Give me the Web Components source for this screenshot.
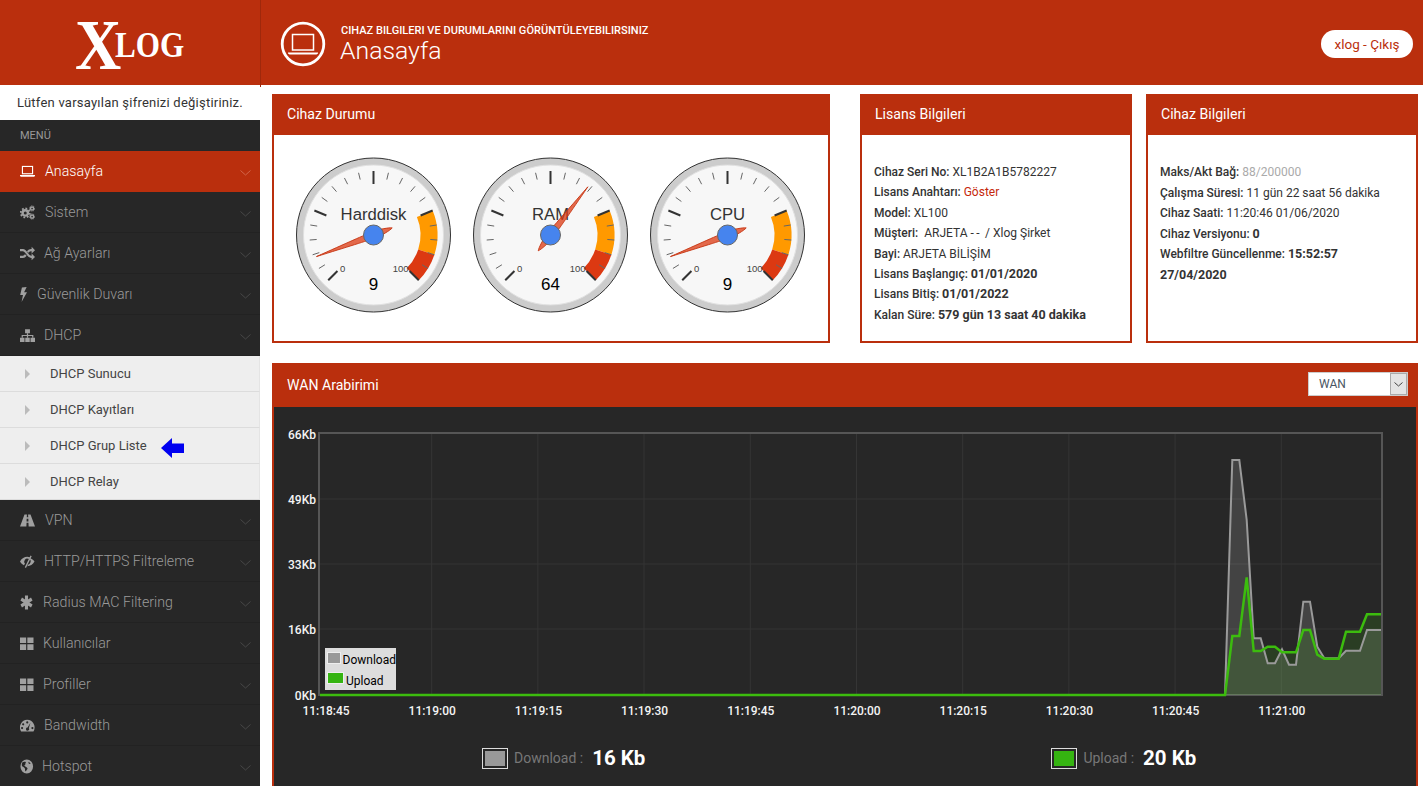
<!DOCTYPE html>
<html lang="tr">
<head>
<meta charset="utf-8">
<title>XLOG - Anasayfa</title>
<style>
  html, body { margin: 0; height: 100%; overflow: hidden; background: #fff; }
  body { font-family: Roboto, "Liberation Sans", sans-serif; color: #333; }
  b { font-weight: 700; font-size: 12.5px; }
  .lbl { font-weight: 500; }
</style>
</head>
<body>
<xlog-app>
  <app-header slot="header"></app-header>
  <side-nav slot="nav">
    <nav-item icon="laptop" active>Anasayfa</nav-item>
    <nav-item icon="cogs">Sistem</nav-item>
    <nav-item icon="random">Ağ Ayarları</nav-item>
    <nav-item icon="bolt">Güvenlik Duvarı</nav-item>
    <nav-item icon="sitemap">DHCP</nav-item>
    <sub-item>DHCP Sunucu</sub-item>
    <sub-item>DHCP Kayıtları</sub-item>
    <sub-item marked>DHCP Grup Liste</sub-item>
    <sub-item>DHCP Relay</sub-item>
    <nav-item icon="road">VPN</nav-item>
    <nav-item icon="eye">HTTP/HTTPS Filtreleme</nav-item>
    <nav-item icon="asterisk">Radius MAC Filtering</nav-item>
    <nav-item icon="grid">Kullanıcılar</nav-item>
    <nav-item icon="grid">Profiller</nav-item>
    <nav-item icon="dash">Bandwidth</nav-item>
    <nav-item icon="globe">Hotspot</nav-item>
  </side-nav>
  <dash-board slot="main">
    <info-card slot="status" heading="Cihaz Durumu" plain>
      <gauge-dial label="Harddisk" value="9"></gauge-dial>
      <gauge-dial label="RAM" value="64"></gauge-dial>
      <gauge-dial label="CPU" value="9"></gauge-dial>
    </info-card>
    <info-card slot="license" heading="Lisans Bilgileri">
      <div><span class="lbl">Cihaz Seri No:</span> XL1B2A1B5782227</div>
      <div><span class="lbl">Lisans Anahtarı:</span> <span style="color:#c5280c">Göster</span></div>
      <div><span class="lbl">Model:</span> XL100</div>
      <div><span class="lbl" style="margin-right:3px">Müşteri:</span> ARJETA <span style="letter-spacing:2.5px">--</span> / Xlog Şirket</div>
      <div><span class="lbl">Bayi:</span> ARJETA BİLİŞİM</div>
      <div><span class="lbl">Lisans Başlangıç:</span> <b>01/01/2020</b></div>
      <div><span class="lbl">Lisans Bitiş:</span> <b>01/01/2022</b></div>
      <div><span class="lbl">Kalan Süre:</span> <b>579 gün 13 saat 40 dakika</b></div>
    </info-card>
    <info-card slot="device" heading="Cihaz Bilgileri" style="--lh: 20.6px">
      <div><span class="lbl">Maks/Akt Bağ:</span> <span style="color:#aaa">88/200000</span></div>
      <div><span class="lbl">Çalışma Süresi:</span> 11 gün 22 saat 56 dakika</div>
      <div><span class="lbl">Cihaz Saati:</span> 11:20:46 01/06/2020</div>
      <div><span class="lbl">Cihaz Versiyonu:</span> <b>0</b></div>
      <div><span class="lbl">Webfiltre Güncellenme:</span> <b>15:52:57</b></div>
      <div><b>27/04/2020</b></div>
    </info-card>
    <wan-panel slot="wan"></wan-panel>
  </dash-board>
</xlog-app>

<script>
// [viewBox width, width in px, gap to the label, markup]
const ICONS = {
  laptop: [16, 15, 10, '<rect x="2.6" y="2.6" width="10.8" height="7.8" fill="none" stroke="currentColor" stroke-width="1.2"/><path d="M0 11.8h16v.9l-1 .8H1l-1-.8z" fill="currentColor"/>'],
  cogs: [16, 15, 10, '<circle cx="5.6" cy="8.4" r="2.9" fill="none" stroke="currentColor" stroke-width="2.6"/><circle cx="5.6" cy="8.4" r="4.8" fill="none" stroke="currentColor" stroke-width="2" stroke-dasharray="1.9 1.8"/><circle cx="12.9" cy="3.7" r="1.7" fill="none" stroke="currentColor" stroke-width="1.6"/><circle cx="12.9" cy="12.3" r="1.7" fill="none" stroke="currentColor" stroke-width="1.6"/><circle cx="12.9" cy="3.7" r="2.8" fill="none" stroke="currentColor" stroke-width="1" stroke-dasharray="1.2 1.2"/><circle cx="12.9" cy="12.3" r="2.8" fill="none" stroke="currentColor" stroke-width="1" stroke-dasharray="1.2 1.2"/>'],
  random: [16, 15, 9, '<path d="M0 4.4h3.2c3.6 0 5 7.2 8.6 7.2h1.4M0 11.6h3.2c1.3 0 2.2-.9 3-2M8.2 6.3c.9-1 2-1.9 3.6-1.9h1.4" fill="none" stroke="currentColor" stroke-width="2.3"/><path d="M12.4 .8 16 4.4l-3.6 3.6zM12.4 8l3.6 3.6-3.6 3.6z" fill="currentColor"/>'],
  bolt: [8, 7, 10, '<path d="M2.2 .5 7.6 0 4.7 5.6H8L1.8 16l1.6-7.500H.2z" fill="currentColor"/>'],
  sitemap: [16, 15, 9, '<path d="M5.400 1.200h5.200v4.300H5.400zM0 10.500h4.800v4.300H0zM5.600 10.500h4.800v4.300H5.600zM11.200 10.500H16v4.300h-4.800z" fill="currentColor"/><path d="M8 5.500v5M2.400 10.500V8h11.200v2.500" fill="none" stroke="currentColor" stroke-width="1.3"/>'],
  road: [16, 15, 10, '<path d="M4.800 1.500h2.600l-.2 3h1.600l-.2-3h2.600L16 14.500H9.200L9 10.500H7L6.800 14.500H0zM7.100 6l-.1 3h2l-.1-3z" fill="currentColor"/>'],
  eye: [16, 14.5, 9.5, '<path d="M0 8c2-3.400 4.800-5 8-5 1 0 1.900.2 2.700.5L9.500 5.200A3.400 3.400 0 0 0 5.500 10.500L4.300 12C2.600 11.200 1.100 9.900 0 8zM5.300 14 11.600 1.500 12.900 2.300 6.600 14.800zM11.800 4.800C13.500 5.600 15 6.700 16 8c-1.800 3.100-4.700 5-8 5l1.200-1.800c2.300-.5 3.600-3.800 1.700-5.900z" fill="currentColor"/>'],
  asterisk: [16, 13, 10, '<path d="M8 .5v15M1.500 4.200l13 7.600M14.500 4.200l-13 7.600" fill="none" stroke="currentColor" stroke-width="3.8"/>'],
  grid: [16, 13.5, 9.5, '<path d="M0 1.500h7.300v6H0zM8.700 1.500H16v6H8.700zM0 8.900h7.300v6H0zM8.700 8.900H16v6H8.700z" fill="currentColor"/>'],
  dash: [16, 14.5, 9.5, '<path fill-rule="evenodd" d="M8 2a8 8 0 0 1 6.800 12.300H1.200A8 8 0 0 1 8 2zM8 3.500a1.200 1.200 0 1 0 0 2.400 1.200 1.200 0 0 0 0-2.400zM3.500 5.500a1.200 1.200 0 1 0 0 2.400 1.200 1.200 0 0 0 0-2.400zM2.300 9.500a1.200 1.200 0 1 0 0 2.400 1.200 1.200 0 0 0 0-2.400zM13.700 9.500a1.200 1.200 0 1 0 0 2.400 1.200 1.200 0 0 0 0-2.400zM11.500 5 8.400 10.200a1.700 1.700 0 1 0 1.300.7z" fill="currentColor"/>'],
  globe: [16, 13.5, 8.5, '<path fill-rule="evenodd" d="M8 .5a7.500 7.500 0 1 1 0 15 7.500 7.500 0 0 1 0-15zM3 3.500C2 5 1.800 6.800 2.800 8c1.200.5 2.300.9 3 2 .4 1-.2 2 .8 3.300.8-.6 1.600-1.700 2.300-2.900.2-1.200-1.300-1.700-2.300-2.200-.5-.9-1.500-.5-2.100-1 .5-.6 1.400-.3 1.800-.9C5.800 5.300 7 4.500 7 3.300 5.800 2.800 4.200 2.700 3 3.500zM10 2.800c-.3.800.6 1.500.3 2.300.7.400 1.500-.1 2.500.2-.5-1-1.500-2-2.800-2.500z" fill="currentColor"/>']
};

class XlogApp extends HTMLElement {
  constructor() {
    super();
    this.attachShadow({ mode: 'open' });
    this.shadowRoot.innerHTML = `
      <style>
        :host { display: grid; grid-template-columns: 260px minmax(0, 1fr); grid-template-rows: 85px 1fr; height: 100vh; overflow: hidden; }
        .head { grid-column: 1 / 3; }
      </style>
      <div class="head"><slot name="header"></slot></div>
      <slot name="nav"></slot>
      <slot name="main"></slot>
    `;
  }
}

class AppHeader extends HTMLElement {
  constructor() {
    super();
    this.attachShadow({ mode: 'open' });
    this.shadowRoot.innerHTML = `
      <style>
        :host { display: flex; height: 85px; background: #ba2f0d; color: #fff; position: relative; }
        .brand { width: 261px; height: 87px; box-sizing: border-box; border-right: 1px solid #9f280b; padding-left: 75px; flex: none; z-index: 1; }
        .logo { display: flex; align-items: baseline; height: 85px; font-family: "Liberation Serif", serif; line-height: 85px; font-weight: 700; }
        .x { font-size: 72px; transform: scaleX(.89); transform-origin: left; margin-right: -12px; position: relative; top: 3px; }
        .log { font-size: 35px; transform: scaleX(.89); transform-origin: left; position: relative; top: -9px; }
        .title { display: flex; align-items: center; margin-left: 19px; flex: 1; }
        svg { width: 46px; height: 48px; flex: none; margin-top: 2px; }
        .txt { margin-left: 14px; padding-top: 8px; }
        .sub { font-size: 11px; font-weight: 500; line-height: 13px; margin: -4px 0 0 1px; letter-spacing: .02px; }
        h1 { font-size: 24.8px; font-weight: 300; line-height: 28px; margin: 0; }
        .out { background: #fff; color: #ba2f0d; font-size: 13.5px; border-radius: 14px; height: 28px; line-height: 28px; width: 92px; text-align: center; margin: 30px 10px 0 0; }
      </style>
      <div class="brand"><div class="logo"><span class="x">X</span><span class="log">LOG</span></div></div>
      <div class="title">
        <svg viewBox="0 0 46 48"><circle cx="23" cy="24" r="20.8" fill="none" stroke="#fff" stroke-width="2.8"/>
          <rect x="12.5" y="14.5" width="21" height="15.5" fill="none" stroke="#fff" stroke-width="1.5"/>
          <path d="M8 32.500h30v1l-1.500 1h-27l-1.500-1z" fill="#fff"/></svg>
        <div class="txt"><div class="sub">CIHAZ BILGILERI VE DURUMLARINI GÖRÜNTÜLEYEBILIRSINIZ</div><h1>Anasayfa</h1></div>
      </div>
      <div class="out">xlog - Çıkış</div>
    `;
  }
}

class SideNav extends HTMLElement {
  constructor() {
    super();
    this.attachShadow({ mode: 'open' });
    this.shadowRoot.innerHTML = `
      <style>
        :host { display: block; width: 260px; }
        .notice { height: 35px; line-height: 36px; font-size: 13px; letter-spacing: .23px; padding-left: 17px; color: #333; background: #fff; white-space: nowrap; }
        .menu { height: 31px; line-height: 31px; font-size: 11px; color: #999; background: #272727; padding-left: 20px; }
      </style>
      <div class="notice">Lütfen varsayılan şifrenizi değiştiriniz.</div>
      <div class="menu">MENÜ</div>
      <slot></slot>
    `;
  }
}

class NavItem extends HTMLElement {
  static get observedAttributes() { return ['icon']; }
  constructor() {
    super();
    this.attachShadow({ mode: 'open' });
    this.shadowRoot.innerHTML = `
      <style>
        :host { display: flex; align-items: center; height: 41px; box-sizing: border-box; padding-left: 20px; background: #272727; color: #9a9a9a; border-bottom: 1px solid #222; font-size: 14.2px; font-weight: 300; position: relative; }
        :host([active]) { background: #ba2f0d; color: #fff; border-bottom-color: #ba2f0d; }
        svg.i { height: 15px; flex: none; color: #a0a0a0; }
        :host([active]) svg.i { color: #fff; }
        svg.c { position: absolute; right: 9px; top: 19px; width: 11px; height: 6px; color: #484848; }
        :host([active]) svg.c { color: #d2654a; }
      </style>
      <svg class="i" viewBox="0 0 16 16" preserveAspectRatio="none"></svg>
      <slot></slot>
      <svg class="c" viewBox="0 0 11 6"><path d="M.5.5l5 4.500 5-4.500" fill="none" stroke="currentColor"/></svg>
    `;
  }
  attributeChangedCallback(name, oldValue, value) {
    const [box, width, gap, markup] = ICONS[value];
    const svg = this.shadowRoot.querySelector('.i');
    svg.style.width = width + 'px';
    svg.style.marginRight = gap + 'px';
    svg.setAttribute('viewBox', `0 0 ${box} 16`);
    svg.innerHTML = markup;
  }
}

class SubItem extends HTMLElement {
  constructor() {
    super();
    this.attachShadow({ mode: 'open' });
    this.shadowRoot.innerHTML = `
      <style>
        :host { display: flex; align-items: center; height: 36px; box-sizing: border-box; padding-left: 25px; background: #eee; color: #444; border-bottom: 1px solid #dcdcdc; border-right: 1px solid #e4e4e4; font-size: 13px; }
        .tri { width: 0; height: 0; border-left: 5px solid #bbb; border-top: 5px solid transparent; border-bottom: 5px solid transparent; margin-right: 20px; }
        .mark { display: none; width: 23px; height: 20px; margin-left: 14px; margin-top: 4px; }
        :host([marked]) .mark { display: block; }
      </style>
      <span class="tri"></span><slot></slot>
      <svg class="mark" viewBox="0 0 23 20"><path d="M0 10 11 0v5.500h12v9.500H11V20z" fill="#0000f0"/></svg>
    `;
  }
}

class DashBoard extends HTMLElement {
  constructor() {
    super();
    this.attachShadow({ mode: 'open' });
    this.shadowRoot.innerHTML = `
      <style>
        :host { display: grid; grid-template-columns: 558px 30px 272px 14px 272px; grid-template-rows: 249px 20px auto; align-content: start; padding: 9px 0 0 12px; }
        ::slotted([slot="status"]) { grid-column: 1; }
        ::slotted([slot="license"]) { grid-column: 3; }
        ::slotted([slot="device"]) { grid-column: 5; }
        ::slotted([slot="wan"]) { grid-column: 1 / 6; grid-row: 3; }
      </style>
      <slot name="status"></slot>
      <slot name="license"></slot>
      <slot name="device"></slot>
      <slot name="wan"></slot>
    `;
  }
}

class InfoCard extends HTMLElement {
  constructor() {
    super();
    this.attachShadow({ mode: 'open' });
    this.shadowRoot.innerHTML = `
      <style>
        :host { display: flex; flex-direction: column; height: 249px; box-sizing: border-box; border: 2px solid #ba2f0d; background: #fff; }
        h2 { margin: 0; height: 39px; line-height: 36px; flex: none; background: #ba2f0d; color: #fff; font-size: 14.1px; font-weight: 450; padding-left: 13px; }
        .body { padding: 27px 12px 0; font-size: 12px; line-height: var(--lh, 20.4px); color: #333; font-variant-ligatures: none; }
        :host([plain]) .body { padding: 12px 0 0 11px; display: flex; }
      </style>
      <h2></h2>
      <div class="body"><slot></slot></div>
    `;
  }
  connectedCallback() {
    this.shadowRoot.querySelector('h2').textContent = this.getAttribute('heading');
  }
}

class GaugeDial extends HTMLElement {
  constructor() {
    super();
    this.attachShadow({ mode: 'open' });
  }
  connectedCallback() {
    const value = +this.getAttribute('value');
    const polar = (v, r) => {
      const a = (-225 + v * 2.7) * Math.PI / 180;
      return [(Math.cos(a) * r).toFixed(2), (Math.sin(a) * r).toFixed(2)];
    };
    const band = (from, to, color) => {
      const [a, b] = polar(from, 64), [c, d] = polar(to, 64), [e, f] = polar(to, 47), [g, h] = polar(from, 47);
      return `<path d="M${a} ${b}A64 64 0 0 1 ${c} ${d}L${e} ${f}A47 47 0 0 0 ${g} ${h}Z" fill="${color}"/>`;
    };
    let ticks = '';
    for (let v = 0; v <= 100; v += 5) {
      const major = v % 25 === 0;
      const [a, b] = polar(v, 64), [c, d] = polar(v, major ? 51 : 57);
      ticks += `<line x1="${a}" y1="${b}" x2="${c}" y2="${d}" stroke="${major ? '#333' : '#666'}" stroke-width="${major ? 2 : 1}"/>`;
    }
    const deg = -135 + value * 2.7;
    this.shadowRoot.innerHTML = `
      <style>
        :host { display: block; width: 177px; height: 177px; flex: none; }
        svg { display: block; font-family: "Liberation Sans", sans-serif; }
      </style>
      <svg width="177" height="177" viewBox="-88.5 -88 177 177">
        <circle r="77" fill="#ccc" stroke="#333"/>
        <circle r="70" fill="#f7f7f7" stroke="#e0e0e0"/>
        ${band(75, 90, '#f90')}${band(90, 100, '#dc3912')}
        ${ticks}
        <text y="-15" text-anchor="middle" font-size="16.7" fill="#333">${this.getAttribute('label')}</text>
        <text x="-33.5" y="37" font-size="9.5" fill="#444">0</text>
        <text x="35" y="37" text-anchor="end" font-size="9.5" fill="#444">100</text>
        <text y="54.5" text-anchor="middle" font-size="17" fill="#000">${value}</text>
        <path transform="rotate(${deg})" d="M0 -61C1.800 -30 3.400 -6 3.200 0C3.400 8 1.600 17 0 20C-1.600 17 -3.400 8 -3.200 0C-3.400 -6 -1.800 -30 0 -61Z" fill="#dc3912" fill-opacity=".75" stroke="#c63310" stroke-width=".8"/>
        <circle r="10" fill="#4684ee" stroke="#666"/>
      </svg>
    `;
  }
}

class WanPanel extends HTMLElement {
  constructor() {
    super();
    this.attachShadow({ mode: 'open' });
    const down = '1225,695 1232.3,460 1239.3,460 1246.7,520 1253.7,638.3 1260.7,638.3 1267.7,663.3 1275,663.3 1282,649.3 1289,664.7 1296,664.7 1303.3,601.7 1310,601.7 1317.3,646.7 1324.3,658.3 1338.7,658.3 1346,650.7 1360,650.7 1367,630 1381,630';
    const up = '1225,695 1232.3,636 1239.3,636 1246.7,577.3 1253.7,651 1260.7,651 1267.7,646.7 1275,646.7 1282,652.3 1296,652.3 1303.3,630 1310,630 1317.3,654.7 1324.3,658.7 1338.7,658.7 1346,631.7 1360,631.7 1367,614.3 1381,614.3';
    const times = ['11:18:45', '11:19:00', '11:19:15', '11:19:30', '11:19:45', '11:20:00', '11:20:15', '11:20:30', '11:20:45', '11:21:00'];
    const xs = [325.5, 431.7, 537.9, 644, 750.3, 856.5, 962.7, 1068.9, 1175.1, 1281.3];
    const ys = [[434, '66Kb'], [499, '49Kb'], [564, '33Kb'], [629, '16Kb'], [695, '0Kb']];
    this.shadowRoot.innerHTML = `
      <style>
        :host { display: block; box-sizing: border-box; border: 2px solid #ba2f0d; border-top: 0; background: #272727; height: 460px; }
        .bar { height: 44px; box-sizing: border-box; background: #ba2f0d; margin: 0 -2px; display: flex; align-items: center; justify-content: space-between; color: #fff; font-size: 14.1px; font-weight: 450; padding: 0 10px 0 15px; }
        .select { width: 100px; height: 24px; margin-top: -2px; box-sizing: border-box; background: #fff; border: 1px solid #ccc; color: #4a5563; font-size: 12px; font-weight: 400; line-height: 22px; padding-left: 10px; position: relative; }
        .arrow { position: absolute; right: 0; top: 0; bottom: 0; width: 17px; box-sizing: border-box; background: #e4e4e4; border: 1px solid #aaa; display: flex; align-items: center; justify-content: center; }
        .chart { position: relative; height: 320px; }
        svg.plot { display: block; font-family: Roboto, "Liberation Sans", sans-serif; }
        .legend { position: absolute; left: 51px; top: 241px; width: 71px; height: 42px; background: #ddd; color: #000; font-size: 12px; box-sizing: border-box; padding-top: 2px; }
        .legend div { display: flex; height: 20.5px; align-items: center; }
        .legend i { width: 15px; height: 10px; margin: -5px 2px 0 2px; border: 1px solid #eee; }
        .stats { display: flex; align-items: center; padding-left: 208px; height: 24px; margin-top: 19px; color: #777; font-size: 14px; }
        .sw { width: 26px; height: 21px; box-sizing: border-box; border: 1px solid #ddd; padding: 2px; margin-right: 6px; display: flex; }
        .sw i { flex: 1; }
        .stats b { color: #fff; font-size: 20.5px; font-weight: 700; margin-left: 9px; }
      </style>
      <div class="bar">WAN Arabirimi
        <div class="select">WAN<span class="arrow"><svg width="9" height="5" viewBox="0 0 9 5"><path d="M.5.5l4 3.500 4-3.500" fill="none" stroke="#444"/></svg></span></div>
      </div>
      <div class="chart">
        <svg class="plot" width="1142" height="320" viewBox="274 407 1142 320">
          ${xs.slice(1).map(x => `<line x1="${x}" y1="433" x2="${x}" y2="695" stroke="#353535"/>`).join('')}
          ${[499, 564, 629].map(y => `<line x1="319" y1="${y}" x2="1382" y2="${y}" stroke="#353535"/>`).join('')}
          <rect x="319" y="433" width="1063" height="262" fill="none" stroke="#565656" stroke-width="2"/>
          <polygon points="${down} 1381,695" fill="#fff" fill-opacity=".134"/>
          <polygon points="${up} 1381,695" fill="#3abf10" fill-opacity=".15"/>
          <polyline points="${down}" fill="none" stroke="#9a9a9a" stroke-width="2"/>
          <polyline points="320,695 ${up}" fill="none" stroke="#3cbc0e" stroke-width="2.5"/>
          ${ys.map(([y, t]) => `<text x="316" y="${y + 5}" text-anchor="end" font-size="12" font-weight="500" fill="#f4f4f4">${t}</text>`).join('')}
          ${times.map((t, i) => `<text x="${xs[i] + 0.5}" y="714.5" text-anchor="middle" font-size="12" font-weight="500" fill="#f4f4f4">${t}</text>`).join('')}
        </svg>
        <div class="legend">
          <div><i style="background:#999"></i>Download</div>
          <div><i style="background:#35b411"></i>Upload</div>
        </div>
      </div>
      <div class="stats">
        <span class="sw"><i style="background:#999"></i></span>Download :<b>16 Kb</b>
        <span class="sw" style="margin-left:406px;"><i style="background:#35b411"></i></span>Upload :<b>20 Kb</b>
      </div>
    `;
  }
}

customElements.define('xlog-app', XlogApp);
customElements.define('app-header', AppHeader);
customElements.define('side-nav', SideNav);
customElements.define('nav-item', NavItem);
customElements.define('sub-item', SubItem);
customElements.define('dash-board', DashBoard);
customElements.define('info-card', InfoCard);
customElements.define('gauge-dial', GaugeDial);
customElements.define('wan-panel', WanPanel);
</script>
</body>
</html>
